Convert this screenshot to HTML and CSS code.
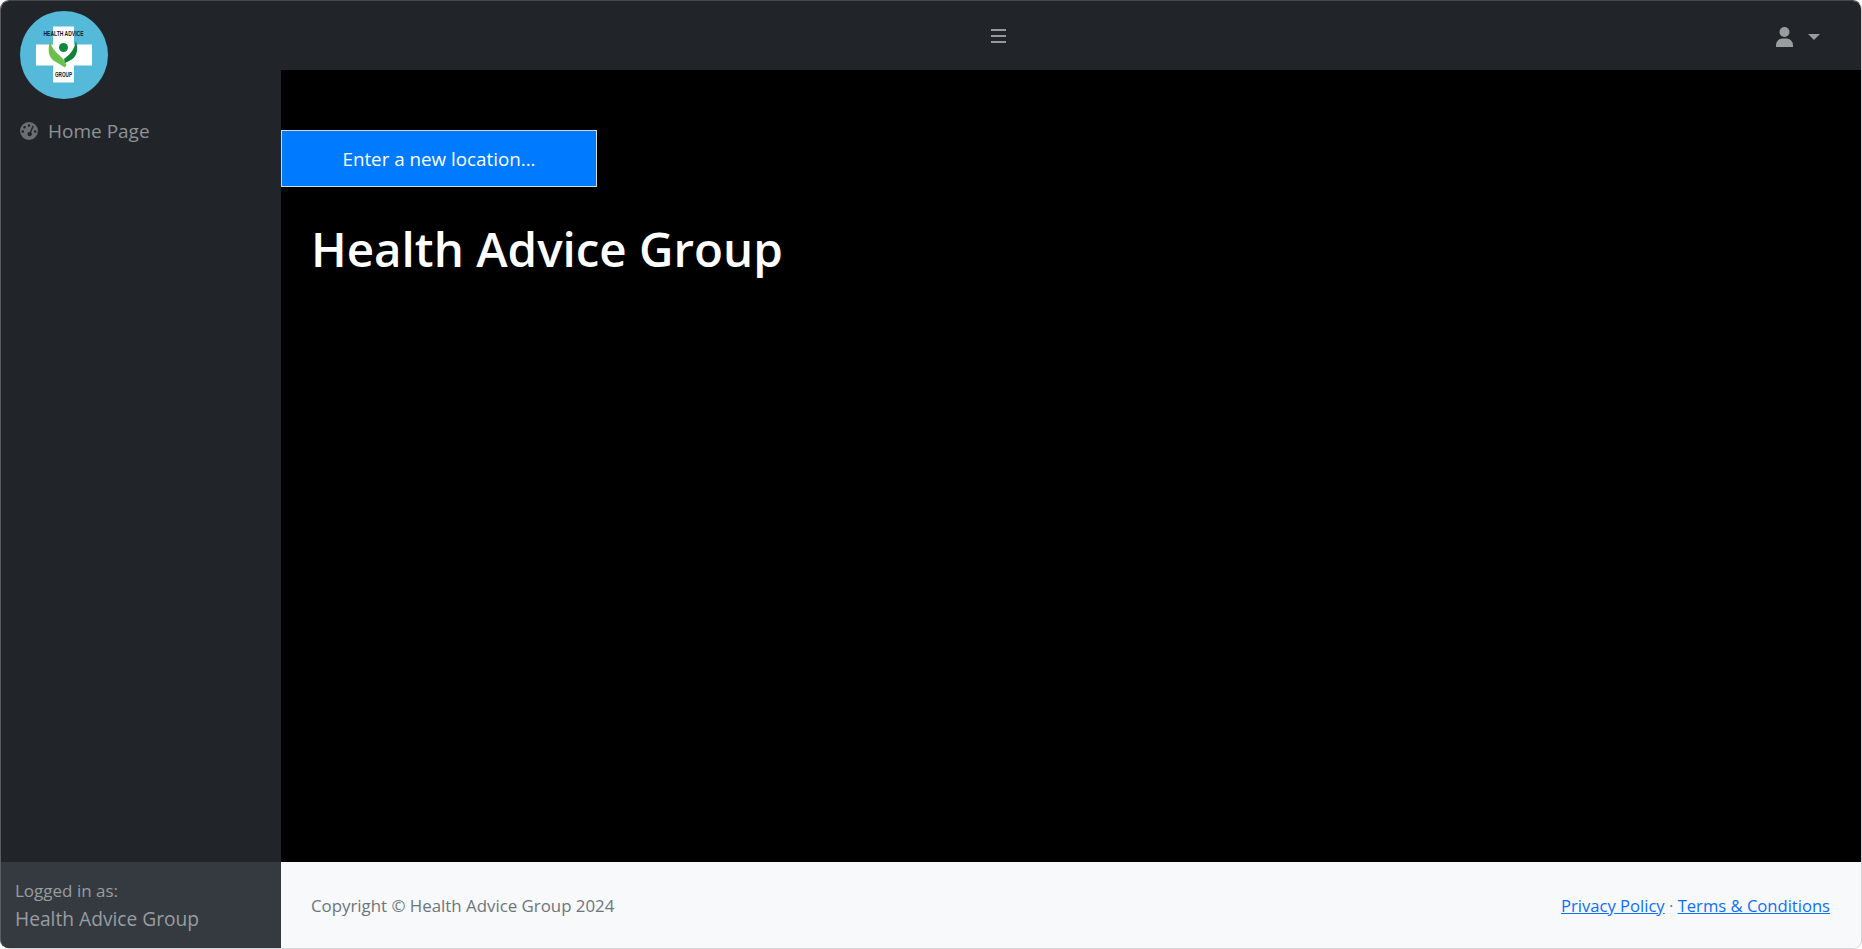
FILE: index.html
```html
<!DOCTYPE html>
<html lang="en">
<head>
<meta charset="utf-8">
<title>Health Advice Group</title>
<link rel="stylesheet" href="styles.css">
</head>
<body>
<div class="app">
  <aside class="sidebar">
    <div class="brand">
      <svg class="logo" viewBox="0 0 88 88" width="88" height="88">
        <circle cx="44" cy="44" r="44" fill="#55b9d9"/>
        <path d="M33 15.500h21V33.500h18V54.500H54V71.500H33V54.500H16V33.500H33z" fill="#fff"/>
        <path d="M30 30C27 40 29 48 36 51L45 56.500 46.500 54 43.500 48.500C40 44 32 40 30 30z" fill="#6cc04a"/>
        <path d="M56 30C59 40 56 47 50 49.500L45 52 44 48C49 44 54 40 56 30z" fill="#12813a"/>
        <circle cx="43.500" cy="36.500" r="4.500" fill="#0f8a3c"/>
        <text class="logo-text" x="23.500" y="25" textLength="40" lengthAdjust="spacingAndGlyphs">HEALTH ADVICE</text>
        <text class="logo-text" x="35" y="65.500" textLength="17" lengthAdjust="spacingAndGlyphs">GROUP</text>
      </svg>
    </div>
    <nav class="side-nav">
      <a class="side-link" href="#">
        <svg class="side-icon" viewBox="0 0 18 18" width="18" height="18">
          <path fill="#6c6f72" fill-rule="evenodd" d="M9 0a9 9 0 1 1 0 18A9 9 0 0 1 9 0zM9 2.200a1.300 1.300 0 1 0 0 2.600 1.300 1.300 0 0 0 0-2.600zM4.600 4a1.300 1.300 0 1 0 0 2.600 1.300 1.300 0 0 0 0-2.600zM2.800 8.200a1.300 1.300 0 1 0 0 2.600 1.300 1.300 0 0 0 0-2.600zM15.200 8.200a1.300 1.300 0 1 0 0 2.600 1.300 1.300 0 0 0 0-2.600zM12.500 3.600l-2.600 6.300a2.200 2.200 0 1 0 1.300.6l2.600-6.300z"/>
        </svg>
        <span>Home Page</span>
      </a>
    </nav>
    <div class="side-foot">
      <div class="foot-small">Logged in as:</div>
      <div class="foot-name">Health Advice Group</div>
    </div>
  </aside>
  <div class="main">
    <header class="topbar">
      <svg class="toggle" viewBox="0 0 15 14" width="15" height="14">
        <path d="M0 1h15M0 7h15M0 13h15" stroke="#96999c" stroke-width="2"/>
      </svg>
      <div class="user">
        <svg viewBox="0 0 17 20" width="17" height="20">
          <circle cx="8.500" cy="5" r="5" fill="#9a9da0"/>
          <path d="M0 20v-1.500c0-4 3-7 6.500-7h4c3.500 0 6.500 3 6.500 7V20z" fill="#9a9da0"/>
        </svg>
        <span class="caret"></span>
      </div>
    </header>
    <main class="content">
      <button class="loc-btn">Enter a new location...</button>
      <h1 class="title">Health Advice Group</h1>
    </main>
    <footer class="footer">
      <span class="copy">Copyright © Health Advice Group 2024</span>
      <span class="links"><a href="#">Privacy Policy</a> · <a href="#">Terms &amp; Conditions</a></span>
    </footer>
  </div>
</div>
</body>
</html>
```
FILE: styles.css
```css
* { box-sizing: border-box; }
html, body { margin: 0; height: 100%; }
body { font-family: "Open Sans", "Noto Sans", sans-serif; font-size: 16px; background: #fff; }
.app { display: flex; height: 949px; border: 1px solid; border-color: #45484b #cfd0d1 #d5d6d7 #5a5d60; border-radius: 9px; overflow: hidden; }
.sidebar { width: 280px; flex: none; background: #212529; display: flex; flex-direction: column; }
.brand { padding: 10px 0 0 19px; height: 107px; }
.logo { display: block; }
.logo-text { font-family: "Liberation Sans", sans-serif; font-size: 7px; font-weight: 700; fill: #0c1a22; }
.side-nav { flex: 1; }
.side-link { display: flex; align-items: center; gap: 10px; padding: 10px 19px; color: #8f9295; text-decoration: none; font-size: 19px; }
.side-foot { background: #343a40; height: 86px; padding: 17px 14px; color: #9a9da0; }
.foot-small { font-size: 17px; line-height: 24px; }
.foot-name { font-size: 19.200px; line-height: 31px; }
.main { flex: 1; display: flex; flex-direction: column; min-width: 0; }
.topbar { height: 69px; background: #212529; display: flex; align-items: center; padding-right: 41px; }
.toggle { margin-left: 710px; margin-top: 1px; }
.user { margin-left: auto; margin-top: 2px; display: flex; align-items: center; gap: 15px; }
.caret { width: 0; height: 0; border-left: 6px solid transparent; border-right: 6px solid transparent; border-top: 6px solid #9a9da0; }
.content { flex: 1; background: #000; padding-top: 60px; }
.loc-btn { display: block; width: 316px; height: 57px; background: #007bff; color: #fff; border: 1px solid #d5d8dc; font: inherit; font-size: 18.800px; }
.title { margin: 33px 0 0 30px; color: #fff; font-size: 47.500px; font-weight: 600; line-height: 58px; }
.footer { height: 86px; background: #f8f9fa; display: flex; align-items: center; justify-content: space-between; padding: 0 31px 0 30px; color: #6c757d; }
.copy { font-size: 16.850px; }
.links { font-size: 16.600px; }
.footer a { color: #0d6efd; }
```
